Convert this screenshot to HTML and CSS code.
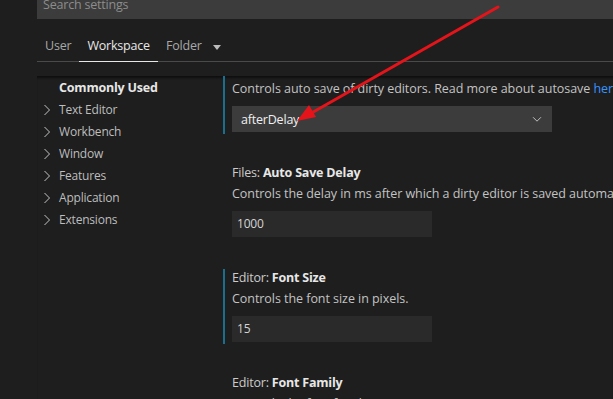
FILE: index.html
```html
<!DOCTYPE html>
<html>
<head>
<meta charset="utf-8">
<link rel="stylesheet" href="styles.css">
</head>
<body>
<div class="editor">
  <div class="search"><span class="placeholder">Search settings</span></div>
  <div class="tabs">
    <div class="tab">User</div>
    <div class="tab active">Workspace</div>
    <div class="tab">Folder <span class="caret"></span></div>
  </div>
  <div class="body">
    <ul class="tree">
      <li class="node top">Commonly Used</li>
      <li class="node"><svg class="chev" viewBox="0 0 16 16"><path d="M5.5 3l5 5-5 5"/></svg>Text Editor</li>
      <li class="node"><svg class="chev" viewBox="0 0 16 16"><path d="M5.5 3l5 5-5 5"/></svg>Workbench</li>
      <li class="node"><svg class="chev" viewBox="0 0 16 16"><path d="M5.5 3l5 5-5 5"/></svg>Window</li>
      <li class="node"><svg class="chev" viewBox="0 0 16 16"><path d="M5.5 3l5 5-5 5"/></svg>Features</li>
      <li class="node"><svg class="chev" viewBox="0 0 16 16"><path d="M5.5 3l5 5-5 5"/></svg>Application</li>
      <li class="node"><svg class="chev" viewBox="0 0 16 16"><path d="M5.5 3l5 5-5 5"/></svg>Extensions</li>
    </ul>
    <div class="list">
      <div class="list-inner">
        <div class="setting focused first">
          <div class="title"><span class="cat">Files: </span><b>Auto Save</b></div>
          <div class="desc">Controls auto save of dirty editors. Read more about autosave <a class="link">here</a>.</div>
          <div class="select"><span>afterDelay</span><svg class="down" viewBox="0 0 16 16"><path d="M3.5 6l4.5 4.5L12.5 6"/></svg></div>
        </div>
        <div class="setting">
          <div class="title"><span class="cat">Files: </span><b>Auto Save Delay</b></div>
          <div class="desc">Controls the delay in ms after which a dirty editor is saved automatically.</div>
          <div class="input">1000</div>
        </div>
        <div class="setting focused">
          <div class="title"><span class="cat">Editor: </span><b>Font Size</b></div>
          <div class="desc">Controls the font size in pixels.</div>
          <div class="input">15</div>
        </div>
        <div class="setting">
          <div class="title"><span class="cat">Editor: </span><b>Font Family</b></div>
          <div class="desc">Controls the font family.</div>
          <div class="input">Consolas, 'Courier New', monospace</div>
        </div>
      </div>
    </div>
  </div>
</div>
<svg class="arrow" width="613" height="399" viewBox="0 0 613 399">
  <line x1="498" y1="7" x2="308" y2="115" />
  <polygon points="297,121 316,117 309,105" />
</svg>
</body>
</html>
```

FILE: styles.css
```css
* { box-sizing: border-box; }
html, body {
  margin: 0;
  padding: 0;
  background: #1e1e1e;
  width: 613px;
  height: 399px;
  overflow: hidden;
}
body {
  font-family: "Open Sans", "Noto Sans", sans-serif;
  font-size: 12px;
  letter-spacing: -0.2px;
  color: #cccccc;
  position: relative;
}
.editor {
  margin-left: 37px;
}
.search {
  height: 19px;
  background: #3c3c3c;
  overflow: hidden;
  padding-left: 6px;
}
.placeholder {
  display: block;
  margin-top: -5px;
  line-height: 20px;
  font-size: 12.5px;
  color: #8c8c8c;
}
.tabs {
  display: flex;
  margin-top: 12px;
  border-bottom: 1px solid #4a4a4a;
  height: 31px;
}
.tab {
  padding: 0 8px;
  line-height: 30px;
  font-size: 12.5px;
  color: #a8a8a8;
  display: flex;
  align-items: center;
}
.tab.active {
  color: #e7e7e7;
  border-bottom: 1px solid #e7e7e7;
  margin-bottom: -1px;
  height: 31px;
}
.caret {
  display: inline-block;
  width: 0;
  height: 0;
  margin-left: 11px;
  border-left: 4.5px solid transparent;
  border-right: 4.5px solid transparent;
  border-top: 5px solid #bbbbbb;
  margin-top: 2px;
}
.body {
  display: flex;
  margin-top: 14px;
  border-top: 1px solid #0f0f0f;
  box-shadow: inset 0 2px 3px -2px #000;
  height: 323px;
}
.tree {
  list-style: none;
  margin: 0;
  padding: 0;
  width: 186px;
  flex: none;
}
.node {
  height: 22px;
  line-height: 22px;
  padding-left: 2px;
  font-size: 12px;
  color: #bdbdbd;
  display: flex;
  align-items: center;
}
.node.top {
  padding-left: 22px;
  font-weight: 700;
  font-size: 12.5px;
  color: #e7e7e7;
}
.chev {
  width: 16px;
  height: 16px;
  margin-right: 4px;
  fill: none;
  stroke: #c5c5c5;
  stroke-width: 1;
}
.list {
  flex: 1;
  overflow: hidden;
  margin-top: -1px;
}
.list-inner {
  margin-top: -17px;
}
.setting {
  border-left: 2px solid transparent;
  padding: 0 0 2px 7px;
  margin-top: 30px;
}
.setting.first { margin-top: 0; }
.setting.focused { border-left-color: #1b6f8e; }
.title {
  padding-top: 1px;
  line-height: 16px;
  height: 17px;
  font-size: 12.5px;
  color: #cccccc;
  white-space: nowrap;
}
.title b {
  font-weight: 700;
  color: #e7e7e7;
}
.desc {
  margin-top: 3px;
  line-height: 20px;
  height: 20px;
  font-size: 12.5px;
  letter-spacing: -0.05px;
  color: #c3c3c3;
  white-space: nowrap;
}
.link { color: #3794ff; }
.select {
  margin-top: 7px;
  width: 320px;
  height: 26px;
  background: #3c3c3c;
  display: flex;
  align-items: center;
  justify-content: space-between;
  padding: 0 8px 0 9px;
  font-size: 12.5px;
  color: #f0f0f0;
}
.down {
  width: 14px;
  height: 14px;
  fill: none;
  stroke: #c5c5c5;
  stroke-width: 1.1;
}
.input {
  margin-top: 7px;
  width: 200px;
  height: 26px;
  line-height: 26px;
  background: #2a2a2a;
  padding-left: 5px;
  font-size: 12px;
  color: #d4d4d4;
  white-space: nowrap;
  overflow: hidden;
}
.arrow {
  position: absolute;
  left: 0;
  top: 0;
  pointer-events: none;
}
.arrow line {
  stroke: #e5141a;
  stroke-width: 3;
  stroke-linecap: round;
}
.arrow polygon {
  fill: #e5141a;
}
```
